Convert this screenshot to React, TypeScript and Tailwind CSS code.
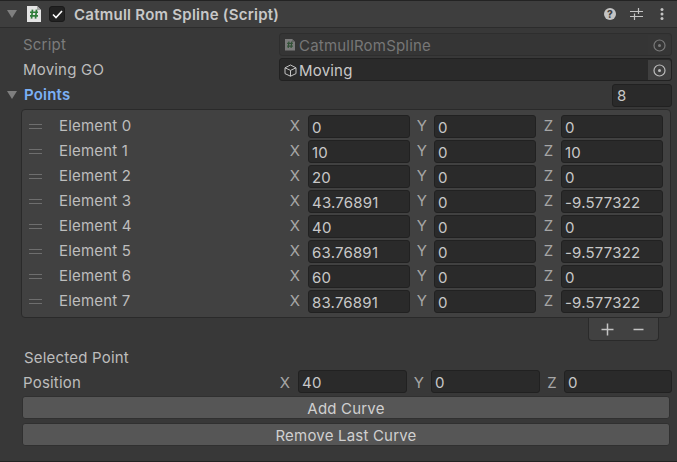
const points = [
  { name: 'Element 0', x: '0', y: '0', z: '0' },
  { name: 'Element 1', x: '10', y: '0', z: '10' },
  { name: 'Element 2', x: '20', y: '0', z: '0' },
  { name: 'Element 3', x: '43.76891', y: '0', z: '-9.577322' },
  { name: 'Element 4', x: '40', y: '0', z: '0' },
  { name: 'Element 5', x: '63.76891', y: '0', z: '-9.577322' },
  { name: 'Element 6', x: '60', y: '0', z: '0' },
  { name: 'Element 7', x: '83.76891', y: '0', z: '-9.577322' },
]

function Foldout() {
  return (
    <svg width="10" height="8" viewBox="0 0 10 8" className="shrink-0">
      <path d="M0 0H10L5 8Z" fill="#7f7f7f" />
    </svg>
  )
}

function ScriptIcon({ size, dim }: { size: number; dim?: boolean }) {
  return (
    <svg width={size} height={size * 1.15} viewBox="0 0 14 16" className={dim ? 'shrink-0 opacity-40' : 'shrink-0'}>
      <path d="M0 0H10L14 4V16H0Z" fill="#e4e4e4" />
      <path d="M10 0L14 4H10Z" fill="#a8a8a8" />
      <path d="M5.5 3.5L4.5 12.5M9.5 3.5L8.5 12.5M3 6.2H11M3 9.8H11" stroke="#2f7d3a" strokeWidth="1.7" fill="none" />
    </svg>
  )
}

function Target({ dim }: { dim?: boolean }) {
  const color = dim ? '#7a7a7a' : '#bdbdbd'
  return (
    <div className={`w-[23px] h-full flex items-center justify-center rounded-r-[3px] ${dim ? 'bg-[#363636]' : 'bg-[#3f3f3f]'}`}>
      <svg width="13" height="13" viewBox="0 0 13 13">
        <circle cx="6.5" cy="6.5" r="5.5" stroke={color} strokeWidth="1.2" fill="none" />
        <circle cx="6.5" cy="6.5" r="1.5" fill={color} />
      </svg>
    </div>
  )
}

function NumField({ label, value, labelW, inputW }: { label: string; value: string; labelW: string; inputW: string }) {
  return (
    <div className="flex items-center">
      <span className={`${labelW} text-center text-[#a6a6a6]`}>{label}</span>
      <div className={`${inputW} h-[23px] pl-[3px] pt-px flex items-center bg-[#2a2a2a] border border-[#212121] rounded-[3px] text-[#c8c8c8]`}>
        {value}
      </div>
    </div>
  )
}

export default function App() {
  return (
    <div className="w-[677px] h-[462px] overflow-hidden flex flex-col bg-[#383838] text-[15px] leading-none tracking-[0.2px] text-[#bdbdbd] font-['Inter','Liberation_Sans',sans-serif]">
      <header className="h-[28px] shrink-0 flex items-center bg-[#3e3e3e] border-t border-b border-t-[#232323] border-b-[#2c2c2c]">
        <div className="ml-[7px]">
          <Foldout />
        </div>
        <div className="ml-[10px]">
          <ScriptIcon size={14} />
        </div>
        <div className="ml-[8px] w-[16px] h-[16px] flex items-center justify-center bg-[#222222] border border-[#1a1a1a] rounded-[3px]">
          <svg width="11" height="9" viewBox="0 0 11 9">
            <path d="M1 4.5L4 7.5L10 1" stroke="#ffffff" strokeWidth="1.6" fill="none" />
          </svg>
        </div>
        <span className="ml-[9px] text-[15px] font-semibold text-[#c8c8c8] tracking-[0.25px]">Catmull Rom Spline (Script)</span>
        <div className="ml-auto mr-[13px] flex items-center">
          <svg width="12" height="12" viewBox="0 0 12 12">
            <circle cx="6" cy="6" r="6" fill="#c4c4c4" />
            <text x="6" y="9.5" textAnchor="middle" fontSize="10" fontWeight="800" fill="#3e3e3e">?</text>
          </svg>
          <svg width="13" height="12" viewBox="0 0 13 12" className="ml-[14px]">
            <path d="M0 3.5H13M0 8.5H13M8.5 0V6M4.5 5.5V12" stroke="#c4c4c4" strokeWidth="1.2" fill="none" />
          </svg>
          <svg width="4" height="12" viewBox="0 0 4 12" className="ml-[17px]">
            <circle cx="2" cy="1.5" r="1.5" fill="#c4c4c4" />
            <circle cx="2" cy="6" r="1.5" fill="#c4c4c4" />
            <circle cx="2" cy="10.5" r="1.5" fill="#c4c4c4" />
          </svg>
        </div>
      </header>

      <div className="flex flex-col pt-[5px] pl-[23px] pr-[5px]">
        <div className="h-[23px] flex items-center">
          <span className="w-[256px] text-[#7c7c7c]">Script</span>
          <div className="flex-1 h-full pt-px flex items-center pl-[5px] bg-[#353535] border border-[#2e2e2e] rounded-[3px] text-[#777777]">
            <ScriptIcon size={10} dim />
            <span className="ml-[4px] flex-1">CatmullRomSpline</span>
            <Target dim />
          </div>
        </div>
        <div className="mt-[2px] h-[23px] flex items-center">
          <span className="w-[256px]">Moving GO</span>
          <div className="flex-1 h-full pt-px flex items-center pl-[4px] bg-[#2a2a2a] border border-[#212121] rounded-[3px] text-[#c8c8c8]">
            <svg width="13" height="13" viewBox="0 0 13 13" className="shrink-0">
              <path d="M6.5 1L12 3.8V9.6L6.5 12.2L1 9.6V3.8ZM1 3.8L6.5 6.4L12 3.8M6.5 6.4V12.2" stroke="#c4c4c4" strokeWidth="1" fill="none" />
            </svg>
            <span className="ml-[2px] flex-1">Moving</span>
            <Target />
          </div>
        </div>

        <div className="mt-[2px] -ml-[16px] h-[24px] flex items-center">
          <Foldout />
          <span className="ml-[7px] mb-px font-semibold text-[#7bb0f5]">Points</span>
          <div className="ml-auto w-[60px] h-[23px] pl-[4px] pt-px flex items-center bg-[#2a2a2a] border border-[#212121] rounded-[3px] text-[#c8c8c8]">8</div>
        </div>

        <div className="mt-[2px] -ml-[2px] mr-px pt-[4px] pb-[3px] flex flex-col bg-[#414141] border border-[#2a2a2a] rounded-[4px]">
          {points.map((p) => (
            <div key={p.name} className="h-[25px] flex items-center">
              <div className="ml-[7px] w-[13px] flex flex-col gap-[3px]">
                <div className="h-px bg-[#6e6e6e]" />
                <div className="h-px bg-[#6e6e6e]" />
              </div>
              <span className="ml-[17px] mb-[2px] w-[225px]">{p.name}</span>
              <NumField label="X" value={p.x} labelW="w-[24px] pr-[2px] mb-[2px]" inputW="w-[102px]" />
              <NumField label="Y" value={p.y} labelW="w-[24px] mb-[2px]" inputW="w-[102px]" />
              <NumField label="Z" value={p.z} labelW="w-[25px] mb-[2px]" inputW="w-[102px]" />
            </div>
          ))}
        </div>

        <div className="self-end mr-[13px] w-[71px] h-[23px] pl-[12px] flex items-center gap-[19px] bg-[#414141] border border-t-0 border-[#2a2a2a] rounded-b-[4px]">
          <svg width="13" height="13" viewBox="0 0 13 13">
            <path d="M6.5 0.5V12.5M0.5 6.5H12.5" stroke="#c4c4c4" strokeWidth="1.5" fill="none" />
          </svg>
          <svg width="11" height="13" viewBox="0 0 11 13">
            <path d="M0.5 6.5H10.5" stroke="#c4c4c4" strokeWidth="1.5" fill="none" />
          </svg>
        </div>

        <div className="mt-[8px] h-[16px] ml-px flex items-center">Selected Point</div>

        <div className="mt-[5px] h-[23px] flex items-center">
          <span className="w-[249px] mt-[2px]">Position</span>
          <NumField label="X" value="40" labelW="w-[26px] mt-[2px]" inputW="w-[109px]" />
          <NumField label="Y" value="0" labelW="w-[24px] mt-[2px]" inputW="w-[109px]" />
          <NumField label="Z" value="0" labelW="w-[24px] mt-[2px]" inputW="w-[108px]" />
        </div>

        <button className="mt-[3px] pt-px -ml-px mr-[2px] h-[23px] flex items-center justify-center bg-[#565656] border border-[#303030] rounded-[3px] text-[#d0d0d0]">Add Curve</button>
        <button className="mt-[4px] pt-px -ml-px mr-[2px] h-[23px] flex items-center justify-center bg-[#565656] border border-[#303030] rounded-[3px] text-[#d0d0d0]">Remove Last Curve</button>
      </div>

      <div className="mt-auto h-px bg-[#232323]" />
    </div>
  )
}
